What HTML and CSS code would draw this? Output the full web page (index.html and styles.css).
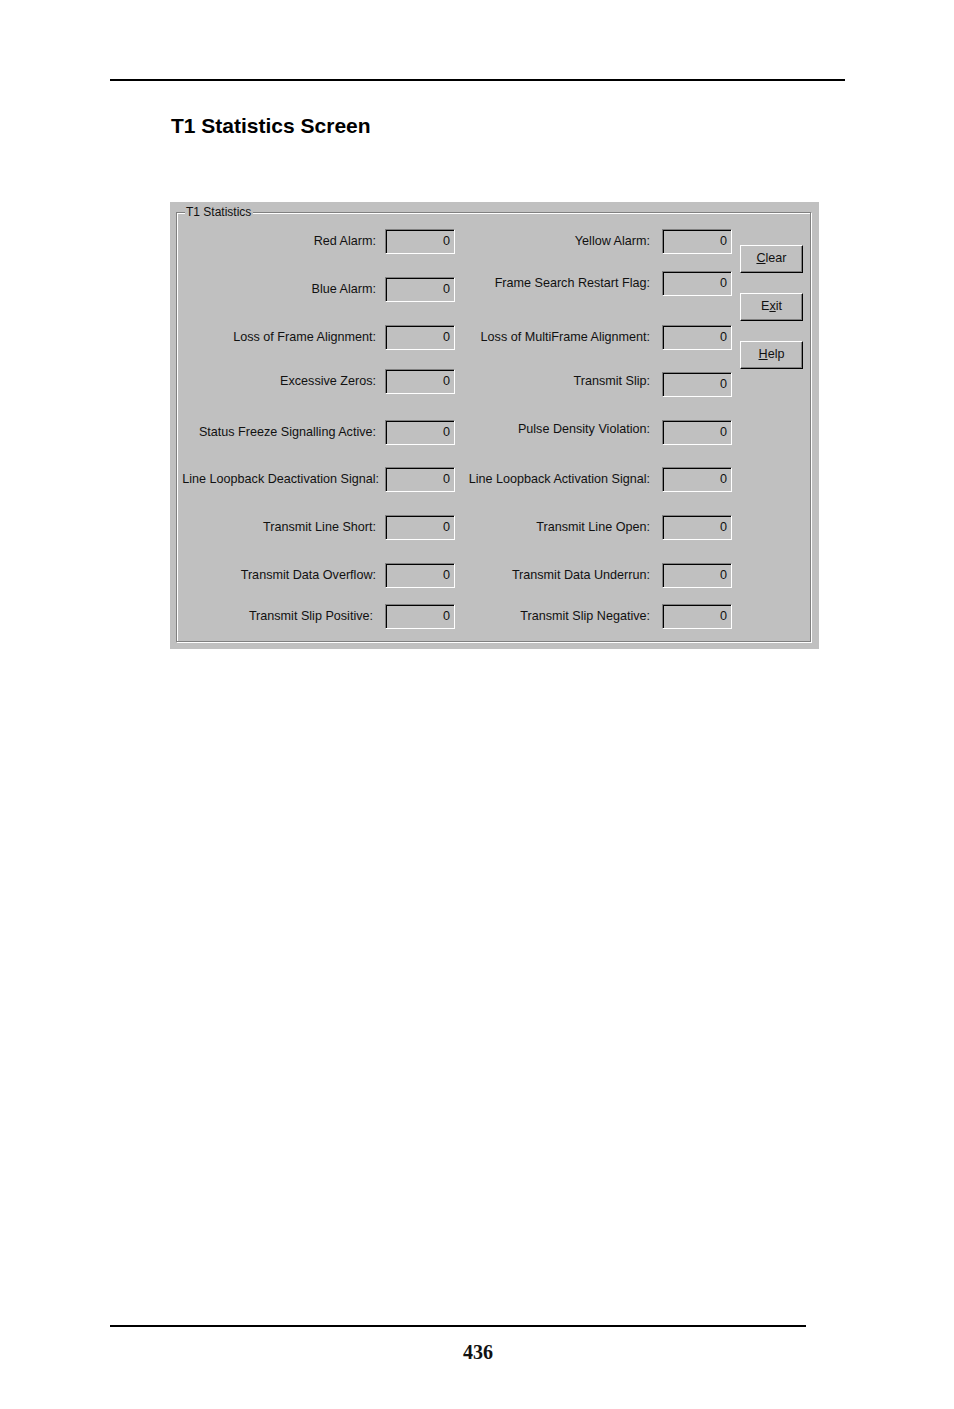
FILE: index.html
```html
<!DOCTYPE html>
<html>
<head>
<meta charset="utf-8">
<title>T1 Statistics Screen</title>
<link rel="stylesheet" href="styles.css">
</head>
<body>
<div class="page">
  <div class="rule-top"></div>
  <h1 class="title">T1 Statistics Screen</h1>

  <div class="dialog">
    <div class="group">
      <span class="legend">T1 Statistics</span>
      <div class="col col-left">
        <div class="row"><span class="lbl">Red Alarm:</span><span class="fld">0</span></div>
        <div class="row g23"><span class="lbl">Blue Alarm:</span><span class="fld">0</span></div>
        <div class="row g23"><span class="lbl">Loss of Frame Alignment:</span><span class="fld">0</span></div>
        <div class="row g19"><span class="lbl">Excessive Zeros:</span><span class="fld">0</span></div>
        <div class="row g26"><span class="lbl">Status Freeze Signalling Active:</span><span class="fld">0</span></div>
        <div class="row g22"><span class="lbl wide">Line Loopback Deactivation Signal:</span><span class="fld">0</span></div>
        <div class="row g23"><span class="lbl">Transmit Line Short:</span><span class="fld">0</span></div>
        <div class="row g23"><span class="lbl">Transmit Data Overflow:</span><span class="fld">0</span></div>
        <div class="row g16"><span class="lbl narrow">Transmit Slip Positive:</span><span class="fld">0</span></div>
      </div>
      <div class="col col-right">
        <div class="row"><span class="lbl">Yellow Alarm:</span><span class="fld">0</span></div>
        <div class="row g17"><span class="lbl">Frame Search Restart Flag:</span><span class="fld">0</span></div>
        <div class="row g29"><span class="lbl">Loss of MultiFrame Alignment:</span><span class="fld">0</span></div>
        <div class="row g22"><span class="lbl up4">Transmit Slip:</span><span class="fld">0</span></div>
        <div class="row g23"><span class="lbl up3">Pulse Density Violation:</span><span class="fld">0</span></div>
        <div class="row g22"><span class="lbl">Line Loopback Activation Signal:</span><span class="fld">0</span></div>
        <div class="row g23"><span class="lbl">Transmit Line Open:</span><span class="fld">0</span></div>
        <div class="row g23"><span class="lbl">Transmit Data Underrun:</span><span class="fld">0</span></div>
        <div class="row g16"><span class="lbl">Transmit Slip Negative:</span><span class="fld">0</span></div>
      </div>
      <div class="buttons">
        <div class="btn"><u>C</u>lear</div>
        <div class="btn">E<u>x</u>it</div>
        <div class="btn"><u>H</u>elp</div>
      </div>
    </div>
  </div>

  <div class="rule-bottom"></div>
  <div class="pagenum">436</div>
</div>
</body>
</html>
```

FILE: styles.css
```css
html, body {
  margin: 0;
  padding: 0;
  background: #ffffff;
}

.page {
  width: 954px;
  height: 1409px;
  overflow: hidden;
}

.rule-top {
  margin: 79px 0 0 110px;
  width: 735px;
  height: 2px;
  background: #000;
}

.title {
  margin: 33px 0 0 171px;
  font-family: "Liberation Sans", Arial, sans-serif;
  font-weight: bold;
  font-size: 21px;
  line-height: 24px;
  color: #000;
}

.dialog {
  margin: 64px 0 0 170px;
  width: 649px;
  height: 447px;
  background: #c0c0c0;
  box-sizing: border-box;
  padding: 10px 0 0 6px;
  font-family: "Liberation Sans", Arial, sans-serif;
  font-size: 12.6px;
  color: #111;
}

.group {
  position: relative;
  width: 635px;
  height: 430px;
  box-sizing: border-box;
  border: 1px solid #808080;
  box-shadow: 1px 1px 0 #fff, inset 1px 1px 0 #fff;
  padding-top: 16px;
  display: flex;
  align-items: flex-start;
}

.legend {
  position: absolute;
  top: -8px;
  left: 8px;
  padding: 0 2px 0 1px;
  background: #c0c0c0;
  line-height: 14px;
  font-size: 12px;
}

.col {
  display: flex;
  flex-direction: column;
}

.col-left {
  width: 278px;
}

.col-right {
  width: 277px;
}

.row {
  display: flex;
  align-items: center;
  height: 25px;
}

.col-left .lbl {
  width: 199px;
  margin-right: 9px;
}

.col-right .lbl {
  width: 195px;
  margin-right: 12px;
}

.lbl {
  text-align: right;
  white-space: nowrap;
  line-height: 14px;
  margin-bottom: 2px;
}

.col-left .lbl.wide {
  width: 202px;
  margin-right: 6px;
}

.col-left .lbl.narrow {
  width: 196px;
  margin-right: 12px;
}

.lbl.up4 {
  margin-bottom: 8px;
}

.lbl.up3 {
  margin-bottom: 7px;
}

.fld {
  width: 70px;
  height: 25px;
  box-sizing: border-box;
  border: 1px solid;
  border-color: #808080 #fff #fff #808080;
  box-shadow: inset 1px 1px 0 #000;
  text-align: right;
  padding: 4px 4px 0 0;
  line-height: 15px;
  background: #c0c0c0;
}

.g16 { margin-top: 16px; }
.g17 { margin-top: 17px; }
.g19 { margin-top: 19px; }
.g22 { margin-top: 22px; }
.g23 { margin-top: 23px; }
.g26 { margin-top: 26px; }
.g29 { margin-top: 29px; }

.buttons {
  margin: 16px 0 0 8px;
  display: flex;
  flex-direction: column;
  gap: 20px;
}

.btn {
  width: 63px;
  height: 28px;
  box-sizing: border-box;
  border: 1px solid;
  border-color: #fff #000 #000 #fff;
  box-shadow: inset -1px -1px 0 #808080;
  display: flex;
  align-items: center;
  justify-content: center;
  padding-bottom: 2px;
  line-height: 14px;
}

.btn u {
  text-decoration: underline;
  text-underline-offset: 1px;
}

.rule-bottom {
  margin: 676px 0 0 110px;
  width: 696px;
  height: 2px;
  background: #000;
}

.pagenum {
  margin: 13px 0 0 110px;
  width: 736px;
  text-align: center;
  font-family: "Liberation Serif", "Times New Roman", serif;
  font-weight: bold;
  font-size: 20px;
  line-height: 24px;
  color: #111;
}
```
